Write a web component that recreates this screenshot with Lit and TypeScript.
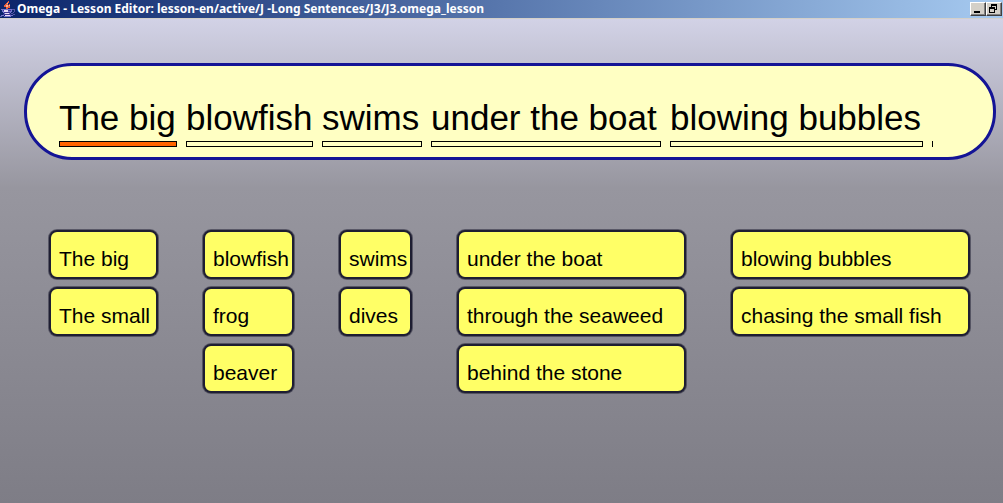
import { LitElement, html, css } from "lit";
import { customElement, state } from "lit/decorators.js";
import { styleMap } from "lit/directives/style-map.js";
import { classMap } from "lit/directives/class-map.js";

interface Slot {
  share: number;
  column: number;
  choices: string[];
}

const SLOTS: Slot[] = [
  { share: 118, column: 109, choices: ["The big", "The small"] },
  { share: 127, column: 91, choices: ["blowfish", "frog", "beaver"] },
  { share: 100, column: 73, choices: ["swims", "dives"] },
  { share: 230, column: 229, choices: ["under the boat", "through the seaweed", "behind the stone"] },
  { share: 253, column: 239, choices: ["blowing bubbles", "chasing the small fish"] },
];

@customElement("title-bar")
class TitleBar extends LitElement {
  static styles = css`
    :host {
      display: flex;
      align-items: center;
      height: 18px;
      padding-right: 1px;
      background: linear-gradient(90deg, #0a246a, #a6caf0);
      border-bottom: 1px solid #d4d0c8;
    }
    .logo { width: 16px; height: 16px; flex: none; }
    .title {
      flex: 1;
      min-width: 0;
      margin: 0 0 0 1px;
      overflow: hidden;
      white-space: nowrap;
      color: #fff;
      font: bold 12px/16px "Noto Sans", "DejaVu Sans", sans-serif;
    }
    .control {
      flex: none;
      width: 16px;
      height: 14px;
      padding: 0;
      border: 1px solid;
      border-color: #fff #404040 #404040 #fff;
      background: #d4d0c8;
      box-shadow: inset -1px -1px #808080;
    }
    .control svg { display: block; }
  `;

  render() {
    return html`
      <svg class="logo" viewBox="0 0 16 16" aria-hidden="true" fill="none" shape-rendering="crispEdges">
        <path d="M8.5 0v2M7.5 1v3M6.5 2v2M5.5 3v3M4.500 4v2M6.5 5v3M9.5 3v1M8.5 4v3M7.5 6v2M9.5 5v2" stroke="#e8603c" />
        <path d="M7.5 2v1M6.5 4v2M9.5 4v1M7.5 4v2" stroke="#f4b498" />
        <path d="M1 8.500h11M2 9.500h10M2 10.500h10M3 11.500h8M4 12.500h6M1 14.500h3M10 14.500h3M4 15.500h7" stroke="#7474cc" />
        <path d="M3 9.500h8M4 11.500h6M3 13.500h8" stroke="#3c3490" />
        <path d="M4 9.500h4M4 10.500h4M5 12.500h4M5 14.500h5" stroke="#e8dcf4" />
        <path d="M12 8.500h3M14.500 9v2M13 11.500h1M11 12.500h2M0 15.500h2M13 13.500h2" stroke="#5858a8" />
      </svg>
      <h1 class="title">Omega - Lesson Editor: lesson-en/active/J -Long Sentences/J3/J3.omega_lesson</h1>
      <button class="control" aria-label="Minimize">
        <svg width="14" height="12" aria-hidden="true"><path d="M3 8h6v2H3z" /></svg>
      </button>
      <button class="control" aria-label="Restore">
        <svg width="14" height="12" aria-hidden="true" fill="none" stroke="#000" shape-rendering="crispEdges">
          <path d="M4 2h6M2 5h6" stroke-width="2" />
          <path d="M4.500 3v1M9.500 3v3.500H8M2.500 6v3.500h5V6" />
        </svg>
      </button>
    `;
  }
}

@customElement("app-root")
class AppRoot extends LitElement {
  static styles = css`
    :host {
      display: flex;
      flex-direction: column;
      min-height: 100vh;
      color: #000;
      font-family: "Liberation Sans", Arial, sans-serif;
    }
    .stage {
      flex: 1;
      padding: 44px 7px 24px 24px;
      background: linear-gradient(#d2d2e6, #97969f 35%, #7e7d86);
    }
    .sentence {
      display: flex;
      gap: 9px;
      padding: 31px 60px 10px 32px;
      border: 3px solid #141496;
      border-radius: 48px;
      background: #ffffc3;
    }
    .word {
      flex-basis: 0;
      min-width: 0;
      white-space: nowrap;
      font-size: 35px;
      line-height: 42px;
    }
    .bar {
      height: 4px;
      margin-top: 2px;
      border: 1px solid #000;
    }
    .active .bar { background: #ff6400; }
    .caret {
      align-self: flex-end;
      width: 1px;
      height: 6px;
      background: #000;
    }
    .columns {
      display: flex;
      align-items: flex-start;
      gap: 45px;
      padding: 70px 26px 0 25px;
    }
    .column {
      display: flex;
      flex-direction: column;
      flex-basis: 0;
      min-width: 0;
      gap: 8px;
    }
    .choice {
      height: 49px;
      padding: 9px 0 0 8px;
      border: 2px solid #1e1e32;
      border-radius: 8px;
      box-shadow: 0 0 0 1px rgba(30, 30, 50, 0.5);
      background: #ffff66;
      color: #000;
      text-align: left;
      white-space: nowrap;
      font: 21px/24px "Liberation Sans", Arial, sans-serif;
    }
  `;

  @state() private picked = SLOTS.map(() => 0);
  @state() private active = 0;

  private pick(slot: number, choice: number) {
    this.picked = this.picked.map((p, i) => (i === slot ? choice : p));
    this.active = slot;
  }

  render() {
    return html`
      <title-bar></title-bar>
      <main class="stage">
        <section class="sentence" aria-label="Sentence">
          ${SLOTS.map((slot, i) => html`
            <div class=${classMap({ word: true, active: i === this.active })} style=${styleMap({ flexGrow: String(slot.share) })}>
              ${slot.choices[this.picked[i]]}
              <div class="bar"></div>
            </div>
          `)}
          <span class="caret"></span>
        </section>
        <section class="columns" aria-label="Words">
          ${SLOTS.map((slot, i) => html`
            <div class="column" style=${styleMap({ flexGrow: String(slot.column) })}>
              ${slot.choices.map((text, c) => html`
                <button class="choice" @click=${() => this.pick(i, c)}>${text}</button>
              `)}
            </div>
          `)}
        </section>
      </main>
    `;
  }
}
